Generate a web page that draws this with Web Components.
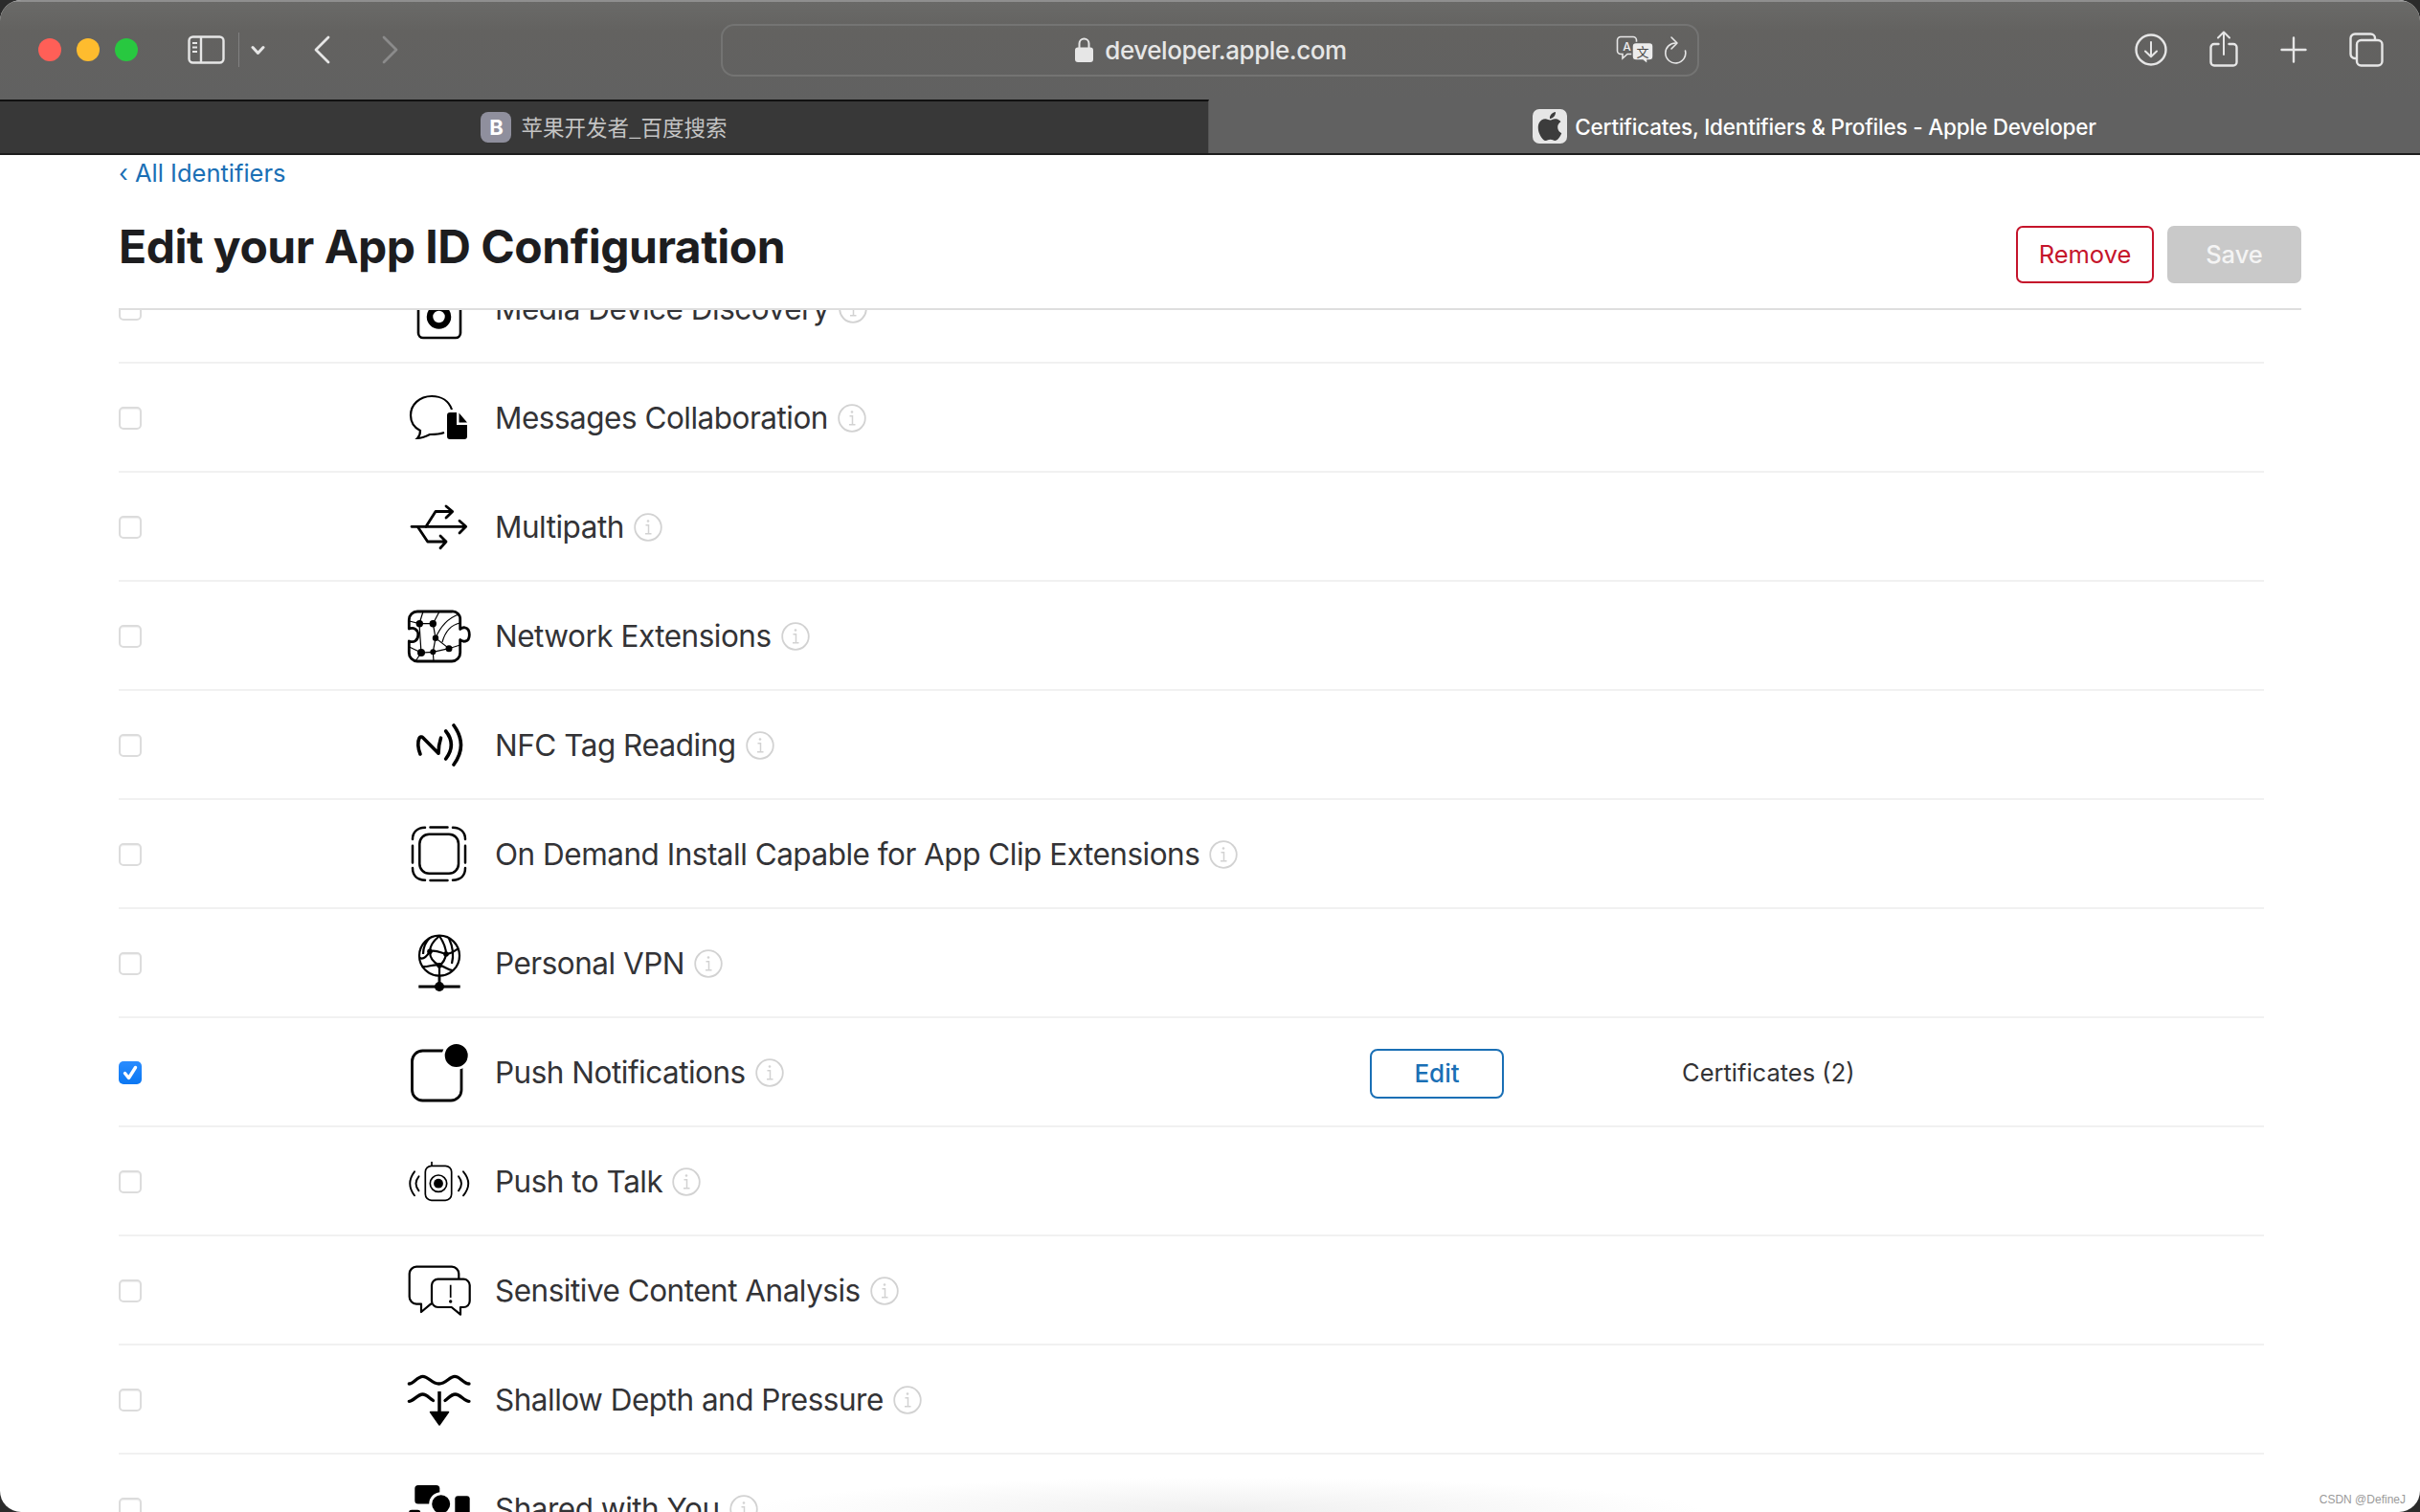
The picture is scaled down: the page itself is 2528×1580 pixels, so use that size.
<!DOCTYPE html>
<html lang="en">
<head>
<meta charset="utf-8">
<title>Certificates, Identifiers & Profiles - Apple Developer</title>
<style>
  html, body { margin: 0; height: 100%; background: #2b2b2b; overflow: hidden; }
  body { font-family: Inter, "Noto Sans CJK SC", sans-serif; }
</style>
</head>
<body>
<safari-window>
  <safari-toolbar slot="toolbar" url="developer.apple.com"></safari-toolbar>
  <safari-tabs slot="tabs"></safari-tabs>
  <page-header></page-header>
  <capability-list>
    <capability-row icon="media" name="Media Device Discovery"></capability-row>
    <capability-row icon="messages" name="Messages Collaboration"></capability-row>
    <capability-row icon="multipath" name="Multipath"></capability-row>
    <capability-row icon="network" name="Network Extensions"></capability-row>
    <capability-row icon="nfc" name="NFC Tag Reading"></capability-row>
    <capability-row icon="ondemand" name="On Demand Install Capable for App Clip Extensions"></capability-row>
    <capability-row icon="vpn" name="Personal VPN"></capability-row>
    <capability-row icon="push" name="Push Notifications" checked note="Certificates (2)"></capability-row>
    <capability-row icon="talk" name="Push to Talk"></capability-row>
    <capability-row icon="sensitive" name="Sensitive Content Analysis"></capability-row>
    <capability-row icon="shallow" name="Shallow Depth and Pressure"></capability-row>
    <capability-row icon="shared" name="Shared with You"></capability-row>
  </capability-list>
</safari-window>

<script>
const APPLE = 'M12.152 6.896c-.948 0-2.415-1.078-3.96-1.04-2.04.027-3.91 1.183-4.961 3.014-2.117 3.675-.546 9.103 1.519 12.09 1.013 1.454 2.208 3.09 3.792 3.039 1.52-.065 2.09-.987 3.935-.987 1.831 0 2.35.987 3.96.948 1.637-.026 2.676-1.48 3.676-2.948 1.156-1.688 1.636-3.325 1.662-3.415-.039-.013-3.182-1.221-3.22-4.857-.026-3.04 2.48-4.494 2.597-4.559-1.429-2.09-3.623-2.324-4.39-2.376-2-.156-3.675 1.09-4.61 1.09zM15.53 3.83c.843-1.012 1.4-2.427 1.245-3.83-1.207.052-2.662.805-3.532 1.818-.78.896-1.454 2.338-1.273 3.714 1.338.104 2.715-.688 3.559-1.701';

// capability icons, all on a 72 box centred on the row
const ICONS = {
  media: `
    <rect x="15" y="6" width="44" height="60" rx="5" stroke-width="2.6"/>
    <circle cx="36.5" cy="44" r="9.5" stroke-width="6.5"/>`,
  messages: `
    <path stroke-width="2.2" d="M50 27C47 18 39 13 29 13 16 13 7 22 7 33c0 7 4 13 10 16 0 3-1 6-3 8 5 0 9-2 13-4 5 0 10 0 15-2"/>
    <path fill="#000" stroke="none" d="M48 30h7v13h11v12a3 3 0 0 1-3 3H48a3 3 0 0 1-3-3V33a3 3 0 0 1 3-3z"/>
    <path fill="#000" stroke="none" d="M57.500 30.500 66 40.500H57.500z"/>`,
  multipath: `
    <g stroke-width="2.8" stroke-linecap="round" stroke-linejoin="round">
      <path d="M8 35.300H64M58 29.300l6.700 6-6.700 6.700"/>
      <path d="M23 35.300 33 19.500H50M44 14l6.700 5.500L44 26"/>
      <path d="M14.700 36 24.700 51H44M38 45l6 6-6 6.700"/>
    </g>`,
  network: `
    <path stroke-width="2.8" stroke-linejoin="round" d="M14 10H50a8 8 0 0 1 8.700 8.700V28.500c2.500-2 4-2 5.500-1.500 5.500 1.500 5.500 13 0 14-1.500.5-3 .5-5.500-1.500V53a8.700 8.700 0 0 1-8.700 9H14a8.700 8.700 0 0 1-8.700-9V41c5 2 9.500-1 9.500-6.500S10 26 5.300 28V18.700A8.700 8.700 0 0 1 14 10z"/>
    <g stroke-width="1.200">
      <path d="M5.500 20 16 22.700 30.300 22.700 33 37.700 47 48.700 58.700 45M16 22.700 18 53 30.300 52.300 47 48.700M33 37.700 30.300 52.300 31 62M20 10 16 22.700M37 10 30.300 22.700M57 13C46 17 38 26 33 37.700M58.500 22C49 24 43 31 40 42M18 53 12 62M5.500 47 18 53"/>
    </g>
    <g fill="#000" stroke="none">
      <circle cx="16.300" cy="22.700" r="3.700"/><circle cx="30.300" cy="22.700" r="3.700"/><circle cx="33" cy="37.700" r="3.200"/>
      <circle cx="47" cy="48.700" r="3.500"/><circle cx="18" cy="53" r="4"/><circle cx="30.300" cy="52.300" r="3"/>
    </g>`,
  nfc: `
    <g stroke-width="3.600" stroke-linecap="round" stroke-linejoin="round">
      <path d="M17 45C14.500 39 14 32 16 28.500c.7-1.500 2.500-2 3.700-.8L36 44.200c0-5 .7-10.500 2.500-16"/>
      <path d="M43.700 21Q55 35 43.700 50"/>
      <path d="M52 15Q67 35.500 52 56"/>
    </g>`,
  ondemand: `
    <rect x="16.300" y="14.700" width="40.700" height="41" rx="10" stroke-width="2.500"/>
    <g stroke-width="2.500" stroke-linecap="round">
      <path d="M9 20C9 12.500 14 8 22 7.700M27.500 7.500H45.500M51 7.700C59 8 64 12.500 64 20M64 26.700V44.500M64 50C64 58 59 62.500 51 62.700M45.500 63H27.500M22 62.700C14 62.500 9 58 9 50M9 44.500V26.700"/>
    </g>`,
  vpn: `
    <g stroke-width="2.200">
      <circle cx="37" cy="27.700" r="21"/>
      <path d="M16.500 30C20 32 24 28 27 23.300 33 21 39 25 44 26 49 26 54 22 57 20"/>
      <path d="M19 39C25 40 31 36 37 37.700 43 39 46 43 51 43"/>
      <path d="M37 7C31 12 27 18 27 23.300 27 30 31 35 37 37.700 37 42 37 46 37 49"/>
      <path d="M37 7C41 13 44 19 44 26 43 32 40 36 37 37.700M27 9C22 14 20 20 20 26M47 9.500C50 16 53 24 50 36"/>
    </g>
    <path stroke-width="2.800" d="M37 48V60M15.300 60H58.700"/>
    <g fill="#000" stroke="none">
      <circle cx="37" cy="60" r="5"/><circle cx="27" cy="23.300" r="2.800"/><circle cx="44" cy="26" r="2.800"/><circle cx="37" cy="37.700" r="2.800"/>
    </g>`,
  push: `
    <rect x="8.500" y="13" width="51.500" height="52" rx="11" stroke-width="2.800"/>
    <circle cx="54.700" cy="18" r="13.500" fill="#000" stroke="#fff" stroke-width="3"/>`,
  talk: `
    <g stroke-width="1.700" stroke-linecap="round">
      <rect x="22.300" y="19.300" width="27.400" height="36" rx="6.500"/>
      <path d="M29 19V15.500"/>
      <circle cx="36" cy="37.700" r="8.700"/>
      <path stroke-width="1.900" d="M15.500 30.300Q9.500 37.700 15.500 45.300M11 25.300Q1.500 37.700 11 50.300M57 30.300Q63 37.700 57 45.300M62 25.300Q72.500 37.700 62 50.300"/>
    </g>
    <circle cx="36" cy="37.700" r="4.900" fill="#000" stroke="none"/>`,
  sensitive: `
    <g stroke-width="2.200" stroke-linejoin="round">
      <path d="M29 49.700H28L18 58V49.700H13A7.500 7.500 0 0 1 5.700 42V18A7.500 7.500 0 0 1 13 10.700H50A7.500 7.500 0 0 1 57.300 18V23.700"/>
      <path d="M35.500 23.700H62A6.500 6.500 0 0 1 68.700 30V46.500A6.500 6.500 0 0 1 62 53H59V60.700L49.700 53H35.500A6.500 6.500 0 0 1 29 46.500V30A6.500 6.500 0 0 1 35.500 23.700z"/>
    </g>
    <path stroke-width="1.700" d="M48.700 29.700V43"/>
    <circle cx="48.700" cy="47" r="1.700" fill="#000" stroke="none"/>`,
  shallow: `
    <g stroke-width="3.300" stroke-linecap="round">
      <path d="M5.300 19C10 19 14 11.300 19.700 11.300 25.500 11.300 29 19 36.500 19 44 19 47.500 11.300 53 11.300 59 11.300 62 19 68 19"/>
      <path d="M5.300 37.300C10 37.300 14 30 19.500 30 23.500 30 26 33.500 30.500 36.500M43 36.500C47 33.500 49.500 30 53.500 30 59 30 63 37.300 68 37.300"/>
    </g>
    <path stroke-width="3.500" d="M37 27V50"/>
    <path fill="#000" stroke="#000" stroke-width="1.500" stroke-linejoin="round" d="M27.500 48.500H46.500L37 62z"/>`,
  shared: `
    <g fill="#000" stroke="none">
      <rect x="11.300" y="11" width="26" height="19.500" rx="3.500"/>
      <circle cx="38.700" cy="30.700" r="11" stroke="#fff" stroke-width="3"/>
      <rect x="53.300" y="22.300" width="15.400" height="24" rx="3"/>
      <rect x="5" y="36.700" width="12.300" height="12" rx="3"/>
    </g>`
};

class SafariWindow extends HTMLElement {
  constructor() {
    super();
    this.attachShadow({ mode: 'open' });
    this.shadowRoot.innerHTML = `
      <style>
        :host {
          display: flex;
          flex-direction: column;
          position: relative;
          width: 2528px;
          height: 1580px;
          border-radius: 22px;
          overflow: hidden;
          background: #fff;
        }
        .page { flex: 1; min-height: 0; display: flex; flex-direction: column; }
        .haze {
          position: absolute;
          left: 780px;
          bottom: 0;
          width: 1000px;
          height: 36px;
          background: radial-gradient(ellipse 50% 100% at 50% 100%, #efefef, rgba(255,255,255,0));
          pointer-events: none;
        }
        .mark {
          position: absolute;
          right: 15px;
          bottom: 6px;
          font: 12px "Liberation Sans", sans-serif;
          color: #9a9a9a;
        }
      </style>
      <slot name="toolbar"></slot>
      <slot name="tabs"></slot>
      <div class="page"><slot></slot></div>
      <div class="haze"></div>
      <div class="mark">CSDN @DefineJ</div>`;
  }
}

class SafariToolbar extends HTMLElement {
  constructor() {
    super();
    this.attachShadow({ mode: 'open' });
  }

  connectedCallback() {
    const url = this.getAttribute('url');
    this.shadowRoot.innerHTML = `
      <style>
        :host {
          display: grid;
          grid-template-columns: 753px 1022px 1fr;
          align-items: center;
          box-sizing: border-box;
          height: 104px;
          padding-bottom: 2px;
          background: linear-gradient(#6a6a68, #636260 30%, #616161);
          border-top: 2px solid #8f8f8f;
          color: #e6e6e6;
        }
        svg { display: block; fill: none; stroke: currentColor; }
        .left { display: flex; align-items: center; height: 100%; padding-left: 40px; }
        .lights { display: flex; gap: 16px; }
        .lights i { width: 24px; height: 24px; border-radius: 50%; }
        .side { margin-left: 52px; }
        .sep { width: 1px; height: 36px; background: #818181; margin-left: 14px; }
        .drop { margin-left: 12px; }
        .back { margin-left: 50px; }
        .fwd { margin-left: 54px; color: #8b8b8b; }
        .url {
          display: flex;
          align-items: center;
          box-sizing: border-box;
          height: 55px;
          border: 2px solid #747473;
          border-radius: 14px;
          position: relative;
        }
        .addr {
          flex: 1;
          display: flex;
          justify-content: center;
          align-items: center;
          gap: 12px;
          padding-left: 87px;
          font-size: 26px;
          font-weight: 500;
          letter-spacing: -.45px;
        }
        .tools { display: flex; align-items: center; gap: 10px; padding-right: 11px; }
        .right { display: flex; align-items: center; justify-content: flex-end; gap: 44px; padding-right: 38px; }
      </style>
      <div class="left">
        <div class="lights">
          <i style="background:#ff5f57"></i><i style="background:#febc2e"></i><i style="background:#28c840"></i>
        </div>
        <svg class="side" width="39" height="30" viewBox="0 0 39 30" stroke-width="2.400">
          <rect x="1.500" y="1.500" width="36" height="27" rx="4"/>
          <path d="M14 1.500V28.500"/>
          <path d="M5 8h5M5 12.500h5M5 17h5" stroke-width="1.800"/>
        </svg>
        <span class="sep"></span>
        <svg class="drop" width="15" height="11" viewBox="0 0 15 11" stroke="#fff" stroke-width="3" stroke-linecap="round" stroke-linejoin="round"><path d="M2 2.500 7.500 8.500 13 2.500"/></svg>
        <svg class="back" width="18" height="30" viewBox="0 0 18 30" stroke-width="2.800" stroke-linecap="round" stroke-linejoin="round"><path d="M16 2 3 15 16 28"/></svg>
        <svg class="fwd" width="18" height="30" viewBox="0 0 18 30" stroke-width="2.800" stroke-linecap="round" stroke-linejoin="round"><path d="M2 2 15 15 2 28"/></svg>
      </div>
      <div class="url">
        <div class="addr">
          <svg width="19" height="26" viewBox="0 0 19 26" stroke-width="2"><rect x="0" y="10.500" width="19" height="15.500" rx="3" fill="currentColor" stroke="none"/><path d="M4.500 11V6.500a5 5 0 0 1 10 0V11"/></svg>
          <span>${url}</span>
        </div>
        <div class="tools">
          <svg width="40" height="30" viewBox="0 0 40 30" stroke-width="1.600">
            <path d="M5 1.500H18a3.500 3.500 0 0 1 3.500 3.500V16a3.500 3.500 0 0 1-3.500 3.500H12L7 24V19.500H5A3.500 3.500 0 0 1 1.500 16V5A3.500 3.500 0 0 1 5 1.500z"/>
            <text x="11.500" y="15.500" text-anchor="middle" font-family="Inter" font-size="12" font-weight="500" fill="#f0f0f0" stroke="none">A</text>
            <path fill="#ececec" stroke="#626261" stroke-width="1.500" d="M21 7.500H35a4 4 0 0 1 4 4V22a4 4 0 0 1-4 4H33V30L28 26H21a4 4 0 0 1-4-4V11.500a4 4 0 0 1 4-4z"/>
            <text x="28" y="22" text-anchor="middle" font-family="Noto Sans CJK SC" font-size="13" fill="#4a4a4a" stroke="none">文</text>
          </svg>
          <svg width="24" height="30" viewBox="0 0 24 30" stroke-width="1.600" stroke-linecap="round" stroke-linejoin="round"><path d="M13 8A10.500 10.500 0 1 0 22.500 16"/><path d="M8 2 14 8 8 14"/></svg>
        </div>
      </div>
      <div class="right">
        <svg width="34" height="34" viewBox="0 0 34 34" stroke-width="2.400" stroke-linecap="round" stroke-linejoin="round"><circle cx="17" cy="17" r="15.500"/><path d="M17 9V24M11 18.500l6 5.800 6-5.800" stroke-width="2"/></svg>
        <svg width="30" height="38" viewBox="0 0 30 38" stroke-width="2.400" stroke-linecap="round" stroke-linejoin="round" style="margin-top:-3px"><path d="M9.500 14H5a3.500 3.500 0 0 0-3.500 3.500V33A3.500 3.500 0 0 0 5 36.500H25a3.500 3.500 0 0 0 3.500-3.500V17.500A3.500 3.500 0 0 0 25 14H20.500"/><path d="M15 25V2M9 7.500l6-6 6 6" stroke-width="2"/></svg>
        <svg width="28" height="28" viewBox="0 0 28 28" stroke-width="2.400" stroke-linecap="round"><path d="M14 1.500V26.500M1.500 14H26.500"/></svg>
        <svg width="36" height="36" viewBox="0 0 36 36" stroke-width="2.400" stroke-linejoin="round"><path d="M8 27H6a4.500 4.500 0 0 1-4.500-4.500V6A4.500 4.500 0 0 1 6 1.500H22.500A4.500 4.500 0 0 1 27 6V8"/><rect x="8" y="8" width="26.500" height="26.500" rx="4.500"/></svg>
      </div>`;
  }
}

class SafariTabs extends HTMLElement {
  constructor() {
    super();
    this.attachShadow({ mode: 'open' });
    this.shadowRoot.innerHTML = `
      <style>
        :host {
          display: grid;
          grid-template-columns: 1263px 1fr;
          box-sizing: border-box;
          height: 58px;
          border-bottom: 2px solid #1c1c1c;
          font-size: 22.5px;
        }
        .tab { display: flex; align-items: center; justify-content: center; gap: 10px; }
        .off { background: #383838; color: #c4c4c4; border-top: 2px solid #111; border-right: 1px solid #555; box-sizing: border-box; }
        .off span:last-child { margin-top: -2px; }
        .on { background: #616161; color: #fff; font-weight: 500; gap: 8px; }
        .b {
          width: 32px; height: 32px; border-radius: 8px;
          background: #8f8f9d; color: #fff;
          display: flex; align-items: center; justify-content: center;
          font: 700 22px Inter, sans-serif;
        }
        .a {
          width: 36px; height: 36px; border-radius: 7px; background: #e6e6e6;
          display: flex; align-items: center; justify-content: center;
        }
        .off span:last-child { font-family: "Noto Sans CJK SC", sans-serif; }
        .on span:last-child { letter-spacing: -.2px; }
      </style>
      <div class="tab off"><span class="b">B</span><span>苹果开发者_百度搜索</span></div>
      <div class="tab on">
        <span class="a"><svg width="30" height="32" viewBox="0 0 24 24" fill="#3c3c3c"><path d="${APPLE}"/></svg></span>
        <span>Certificates, Identifiers &amp; Profiles - Apple Developer</span>
      </div>`;
  }
}

class PageHeader extends HTMLElement {
  constructor() {
    super();
    this.attachShadow({ mode: 'open' });
    this.shadowRoot.innerHTML = `
      <style>
        :host {
          display: flex;
          justify-content: space-between;
          box-sizing: border-box;
          height: 162px;
          margin: 0 124px;
          border-bottom: 2px solid #dedede;
          position: relative;
          z-index: 1;
          background: #fff;
        }
        a { display: block; margin-top: 3px; font-size: 25.5px; line-height: 32px; color: #1a6fb5; text-decoration: none; }
        h1 { margin: 33px 0 0; font-size: 48px; line-height: 56px; font-weight: 700; color: #1d1d1f; letter-spacing: -.5px; }
        .actions { display: flex; gap: 14px; padding-top: 74px; }
        .btn {
          box-sizing: border-box;
          height: 60px;
          border-radius: 7px;
          display: flex;
          align-items: center;
          justify-content: center;
          font-size: 25.5px;
          padding-bottom: 2px;
        }
        .remove { width: 144px; border: 2px solid #c5142b; color: #c5142b; }
        .save { width: 140px; background: #c9c9c9; color: #f4f4f4; font-weight: 500; }
      </style>
      <div>
        <a href="#">‹ All Identifiers</a>
        <h1>Edit your App ID Configuration</h1>
      </div>
      <div class="actions">
        <div class="btn remove">Remove</div>
        <div class="btn save">Save</div>
      </div>`;
  }
}

class CapabilityList extends HTMLElement {
  constructor() {
    super();
    this.attachShadow({ mode: 'open' });
    this.shadowRoot.innerHTML = `
      <style>
        :host { display: block; flex: 1; min-height: 0; overflow: hidden; padding: 0 163px 0 124px; }
        /* list is scrolled, first row sits partly under the header */
        .scroll { margin-top: -58px; }
      </style>
      <div class="scroll"><slot></slot></div>`;
  }
}

class CapabilityRow extends HTMLElement {
  constructor() {
    super();
    this.attachShadow({ mode: 'open' });
  }

  connectedCallback() {
    const note = this.getAttribute('note');
    const checked = this.hasAttribute('checked');
    this.shadowRoot.innerHTML = `
      <style>
        :host {
          display: grid;
          grid-template-columns: 298px 95px 914px 326px 1fr;
          align-items: center;
          box-sizing: border-box;
          height: 114px;
          padding-top: 2px;
          border-bottom: 2px solid #f1f1f1;
        }
        .check {
          box-sizing: border-box;
          width: 24px;
          height: 24px;
          border-radius: 5px;
          border: 2px solid #dcdcdc;
          background: #fff;
          box-shadow: inset 0 1px 1px #f0f0f0;
        }
        .check.on { border: 0; background: linear-gradient(#2a8cff, #0a77f2); box-shadow: none; }
        .check svg { display: block; }
        .name { display: flex; align-items: center; gap: 10px; font-size: 31.5px; color: #333336; letter-spacing: -.5px; }
        .name span { margin-bottom: 2px; }
        svg.ic { display: block; fill: none; stroke: #000; }
        .edit {
          box-sizing: border-box;
          width: 140px;
          height: 52px;
          margin-top: 1px;
          border: 2px solid #1a6fb5;
          border-radius: 8px;
          color: #1a6fb5;
          display: flex;
          align-items: center;
          justify-content: center;
          font-size: 26px;
          font-weight: 500;
        }
        .note { font-size: 25.5px; color: #333336; padding-bottom: 2px; }
      </style>
      <div class="check${checked ? ' on' : ''}">${checked ? '<svg width="24" height="24" viewBox="0 0 24 24" fill="none" stroke="#fff" stroke-width="3.400" stroke-linecap="round" stroke-linejoin="round"><path d="M6.500 12.500 10.500 17.500 17.500 6.500"/></svg>' : ''}</div>
      <svg class="ic" width="72" height="72" viewBox="0 0 72 72">${ICONS[this.getAttribute('icon')]}</svg>
      <div class="name"><span>${this.getAttribute('name')}</span><info-icon></info-icon></div>
      <div>${note ? '<div class="edit">Edit</div>' : ''}</div>
      <div class="note">${note || ''}</div>`;
  }
}

class InfoIcon extends HTMLElement {
  constructor() {
    super();
    this.attachShadow({ mode: 'open' });
    this.shadowRoot.innerHTML = `
      <style>
        :host { display: block; width: 30px; height: 30px; }
        svg { display: block; }
      </style>
      <svg width="30" height="30" viewBox="0 0 30 30" fill="none" stroke="#d2d2d2" stroke-width="1.800">
        <circle cx="15" cy="15" r="13.800"/>
        <path stroke-width="1.500" d="M12.500 12.800H15.500V21.500M12 21.800H18.500"/>
        <circle cx="15" cy="8.500" r="1.300" fill="#d2d2d2" stroke="none"/>
      </svg>`;
  }
}

customElements.define('safari-window', SafariWindow);
customElements.define('safari-toolbar', SafariToolbar);
customElements.define('safari-tabs', SafariTabs);
customElements.define('page-header', PageHeader);
customElements.define('capability-list', CapabilityList);
customElements.define('capability-row', CapabilityRow);
customElements.define('info-icon', InfoIcon);
</script>
</body>
</html>
